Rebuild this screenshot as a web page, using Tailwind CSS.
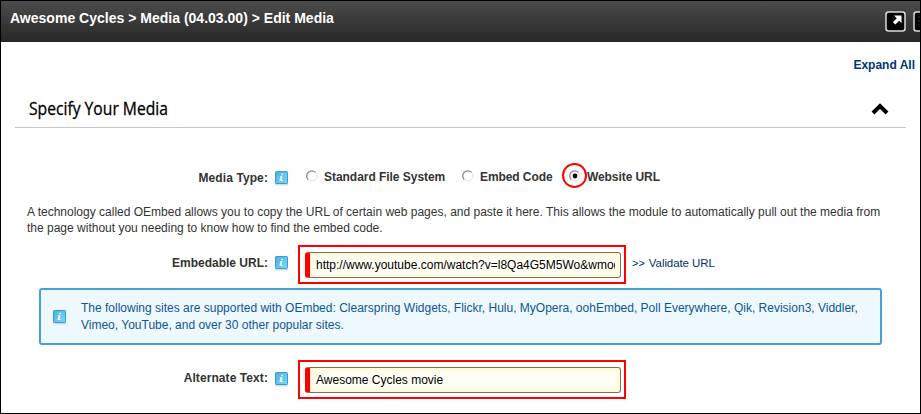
<!DOCTYPE html>
<html lang="en">
<head>
<meta charset="utf-8">
<title>Edit Media</title>
<script src="https://cdn.jsdelivr.net/npm/@tailwindcss/browser@4"></script>
</head>
<body class="w-[921px] h-[414px] overflow-hidden border border-black bg-white font-['Liberation_Sans',Arial,sans-serif] text-[12px] leading-[16px] text-[#333]">
<svg class="absolute size-0">
  <defs>
    <linearGradient id="blue" x1="0" y1="0" x2="1" y2="1"><stop offset="0" stop-color="#49b2e2"/><stop offset="1" stop-color="#7bd6fa"/></linearGradient>
    <symbol id="info" viewBox="0 0 13 15">
      <rect x="0" y="12" width="13" height="2.4" rx="1" fill="#c9cdd0" opacity=".7"/>
      <rect x=".5" y=".5" width="12" height="12" rx=".8" fill="url(#blue)" stroke="#369bd0"/>
      <path d="M6.500 2.700h1.600l-.4 1.500H6.100zM5 5.200h2.600L6.700 9h1v1H4.400l.9-3.900h-.6z" fill="#eefaff"/>
    </symbol>
    <symbol id="radio" viewBox="0 0 12 12">
      <circle cx="6" cy="6" r="5" fill="#fff" stroke="#e2e2e2"/>
      <path d="M2.200 9.600A5 5 0 0 1 9.500 2.300" fill="none" stroke="#8d8d8d" stroke-width="1.300"/>
    </symbol>
  </defs>
</svg>
<header class="flex h-[41px] justify-between bg-linear-to-b from-[#4c4c4c] to-[#272727] pl-[9px]">
  <h1 class="pt-[9px] text-[14px] leading-[16px] font-bold tracking-[.01px] whitespace-nowrap text-white">Awesome Cycles &gt; Media (04.03.00) &gt; Edit Media</h1>
  <div class="flex w-[35px] shrink-0 gap-[7px] overflow-hidden pt-[10px]">
    <svg class="size-[21px] shrink-0" viewBox="0 0 21 21"><rect x="1" y="1" width="19" height="19" rx="2.500" fill="#050505" stroke="#dcdcdc" stroke-width="1.500"/><path d="M9 4.500h7.500V12l-2.300-2.300-3.900 3.900-2.400-2.400 3.900-3.900z" fill="#fff"/></svg>
    <svg class="size-[21px] shrink-0" viewBox="0 0 21 21"><rect x="1" y="1" width="19" height="19" rx="2.500" fill="#050505" stroke="#dcdcdc" stroke-width="1.500"/><path d="M5.500 6h1M5.500 10h1M5.500 14h1" stroke="#555"/></svg>
  </div>
</header>
<main>
  <div class="flex h-[44px] justify-end pt-[15px] pr-[5px]"><a class="font-bold text-[#003874]">Expand All</a></div>
  <div class="mr-[14px] ml-[14px] flex h-[42px] justify-between border-b border-[#c8c8c8] pr-[17px] pl-[14px]">
    <h2 class="origin-left scale-x-[.87] pt-[10px] font-['Open_Sans','Noto_Sans',sans-serif] text-[18px] leading-[24px] font-medium whitespace-nowrap text-black [-webkit-text-stroke:.3px_#000]">Specify Your Media</h2>
    <svg class="mt-[17px] h-[12px] w-[18px]" viewBox="0 0 18 12"><path d="M2 10 9 3l7 7" fill="none" stroke="#000" stroke-width="4"/></svg>
  </div>
  <div class="flex h-[76px] pt-[41px] font-bold whitespace-nowrap">
    <div class="w-[267px] pt-px text-right tracking-[.1px]">Media Type:</div>
    <svg class="mt-[2px] ml-[7px] h-[15px] w-[13px]"><use href="#info"/></svg>
    <svg class="mt-[1px] ml-[18px] size-[12px]"><use href="#radio"/></svg>
    <span class="ml-[6px] w-[138px] tracking-[-.04px]">Standard File System</span>
    <svg class="mt-[1px] size-[12px]"><use href="#radio"/></svg>
    <span class="ml-[6px] w-[89px] tracking-[-.08px]">Embed Code</span>
    <div class="relative mt-[1px] size-[12px]">
      <svg class="size-[12px]"><use href="#radio"/></svg>
      <svg class="absolute -top-[7px] -left-[7px] size-[26px]" viewBox="0 0 26 26"><circle cx="13" cy="13" r="2.400" fill="#000"/><circle cx="12.500" cy="12.500" r="11.500" fill="none" stroke="#f00" stroke-width="2"/></svg>
    </div>
    <span class="ml-[6px] tracking-[-.08px]">Website URL</span>
  </div>
  <p class="ml-[26px] h-[41px] whitespace-nowrap">A technology called OEmbed allows you to copy the URL of certain web pages, and paste it here. This allows the module to automatically pull out the media from<br>the page without you needing to know how to find the embed code.</p>
  <div class="flex h-[39px] whitespace-nowrap">
    <div class="w-[267px] pt-[10px] text-right font-bold">Embedable URL:</div>
    <svg class="mt-[11px] ml-[7px] h-[15px] w-[13px]"><use href="#info"/></svg>
    <div class="ml-[10px] w-[328px] border-2 border-[#f00] p-[5px]">
      <div class="h-[26px] w-[316px] overflow-hidden rounded-[3px] border border-l-[5px] border-[#77705a] border-l-[#f00] bg-[#fffff4] pt-[4px] pr-[5px] pl-[6px] text-black shadow-[inset_0_0_6px_#fff0b8]"><div class="overflow-hidden">http://www.youtube.com/watch?v=l8Qa4G5M5Wo&amp;wmode=transparent</div></div>
    </div>
    <a class="ml-[6px] flex gap-[4px] pt-[10px] text-[11.500px] text-[#003366]"><span class="text-[11px]">&gt;&gt;</span><span class="tracking-[-.08px]">Validate URL</span></a>
  </div>
  <div class="mt-[4px] ml-[38px] flex h-[57px] w-[843px] rounded-[3px] border-2 border-[#46a1d5] bg-[#eef8ff] whitespace-nowrap text-[#0d5790]">
    <svg class="mt-[20px] ml-[12px] h-[15px] w-[13px]"><use href="#info"/></svg>
    <p class="ml-[15px] pt-[10px] leading-[17px]">The following sites are supported with OEmbed: Clearspring Widgets, Flickr, Hulu, MyOpera, oohEmbed, Poll Everywhere, Qik, Revision3, Viddler,<br>Vimeo, YouTube, and over 30 other popular sites.</p>
  </div>
  <div class="mt-[15px] flex h-[39px] whitespace-nowrap">
    <div class="w-[267px] pt-[10px] text-right font-bold tracking-[.08px]">Alternate Text:</div>
    <svg class="mt-[12px] ml-[7px] h-[15px] w-[13px]"><use href="#info"/></svg>
    <div class="ml-[10px] w-[328px] border-2 border-[#f00] p-[5px]">
      <div class="h-[26px] w-[316px] rounded-[3px] border border-l-[5px] border-[#77705a] border-l-[#f00] bg-[#fffff4] pt-[4px] pl-[6px] text-black shadow-[inset_0_0_6px_#fff0b8]">Awesome Cycles movie</div>
    </div>
  </div>
</main>
</body>
</html>
